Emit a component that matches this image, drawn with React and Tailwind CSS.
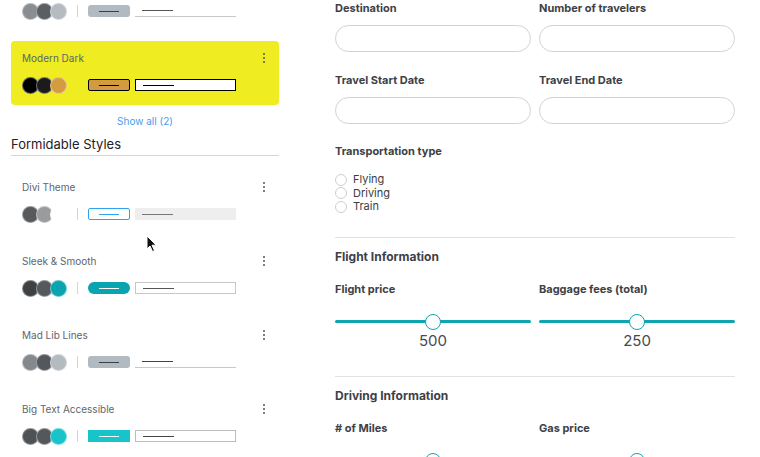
import React from 'react'

const font = { fontFamily: 'Inter, "Noto Sans", sans-serif' }

function Kebab() {
  return (
    <div className="flex flex-col gap-[2px] items-center w-[3px]">
      <span className="w-[2px] h-[2px] rounded-full bg-[#555]" />
      <span className="w-[2px] h-[2px] rounded-full bg-[#555]" />
      <span className="w-[2px] h-[2px] rounded-full bg-[#555]" />
    </div>
  )
}

function Swatches({ colors, button, input, line }) {
  return (
    <div className="flex items-center h-4">
      <div className="flex items-center">
        {colors.map((c, i) => (
          <span
            key={i}
            className={`w-[17px] h-[17px] rounded-full border border-white/40 ${i > 0 ? '-ml-[3px]' : ''} ${c}`}
          />
        ))}
      </div>
      <span className="ml-[10px] w-px h-[12px] bg-[#d4d4d4]" />
      <div className={`ml-[10px] w-[42px] h-[12px] flex items-center justify-center ${button}`}>
        <span className={`w-[20px] h-px ${line}`} />
      </div>
      <div className={`ml-[5px] w-[101px] h-[12px] flex items-center pl-[7px] ${input}`}>
        <span className="w-[31px] h-px bg-current" />
      </div>
    </div>
  )
}

function StyleCard({ title, highlight, ...sw }) {
  return (
    <div className={`rounded-[4px] px-[11px] pt-[10px] pb-[12px] ${highlight ? 'bg-[#efec21]' : ''}`}>
      <div className="flex items-center justify-between h-[14px] pr-[3px]">
        <span className="text-[10px] text-[#60656b] leading-[14px]">{title}</span>
        <Kebab />
      </div>
      <div className="mt-[12px]">
        <Swatches {...sw} />
      </div>
    </div>
  )
}

function Label({ children, className = '' }) {
  return <div className={`text-[11px] font-bold text-[#3d4147] leading-[14px] ${className}`}>{children}</div>
}

function Field({ label }) {
  return (
    <div>
      <Label>{label}</Label>
      <div className="mt-[10px] h-[27px] rounded-full border border-[#d2d2d2] bg-white" />
    </div>
  )
}

function Slider({ label, value, pct }) {
  return (
    <div>
      <Label>{label}</Label>
      <div className="relative mt-[18px] h-[16px] flex items-center">
        <div className="w-full h-[3px] rounded-full bg-[#0ea5b1]" />
        <span
          className="absolute top-0 w-[16px] h-[16px] -ml-[8px] rounded-full bg-white border border-[#0ea5b1]"
          style={{ left: pct + '%' }}
        />
      </div>
      <div className="relative h-[18px] mt-[2px]">
        <span
          className="absolute -translate-x-1/2 text-[15px] leading-[18px] text-[#474a4f]"
          style={{ left: pct + '%' }}
        >
          {value}
        </span>
      </div>
    </div>
  )
}

export default function App() {
  return (
    <div className="relative flex w-[760px] h-[457px] overflow-hidden bg-white" style={font}>
      <div className="w-[290px] shrink-0 pl-[11px] pr-[11px]">
        <div className="px-[11px] pt-[3px] pb-[12px]">
          <Swatches
            colors={['bg-[#8a8e93]', 'bg-[#5a5f64]', 'bg-[#b4bbc1]']}
            button="bg-[#b2bac1] rounded-[3px]"
            line="bg-[#3a3f44]"
            input="border-b border-[#c8c8c8] text-[#555]"
          />
        </div>
        <div className="mt-[10px]">
          <StyleCard
            title="Modern Dark"
            highlight
            colors={['bg-black', 'bg-[#1b1b1b]', 'bg-[#d39c40]']}
            button="bg-[#d29b42] border border-black rounded-[2px]"
            line="bg-black"
            input="bg-white border border-black text-black"
          />
        </div>
        <div className="mt-[9px] text-center text-[10px] leading-[14px] text-[#4a9cee]">Show all (2)</div>
        <div className="mt-[7px] text-[13px] leading-[18px] text-[#1f2124] pb-[2px] border-b border-[#d6d6d6]">
          Formidable Styles
        </div>
        <div className="mt-[14px] flex flex-col gap-[10px]">
          <StyleCard
            title="Divi Theme"
            colors={['bg-[#58595b]', 'bg-[#9a9b9d]', 'bg-white']}
            button="bg-white border border-[#2ea3f2] rounded-[2px]"
            line="bg-[#2ea3f2]"
            input="bg-[#eeeeee] text-[#777]"
          />
          <StyleCard
            title="Sleek & Smooth"
            colors={['bg-[#3e4144]', 'bg-[#56595c]', 'bg-[#0aa3b0]']}
            button="bg-[#0aa3b0] rounded-full"
            line="bg-white"
            input="bg-white border border-[#c8c8c8] text-[#555]"
          />
          <StyleCard
            title="Mad Lib Lines"
            colors={['bg-[#85898e]', 'bg-[#53585d]', 'bg-[#b3bac0]']}
            button="bg-[#b2bac1] rounded-[3px]"
            line="bg-[#3a3f44]"
            input="border-b border-[#c8c8c8] text-[#444]"
          />
          <StyleCard
            title="Big Text Accessible"
            colors={['bg-[#4f5254]', 'bg-[#55585a]', 'bg-[#17c4c9]']}
            button="bg-[#17c4c9]"
            line="bg-white"
            input="bg-white border border-[#bdbdbd] text-[#444]"
          />
        </div>
      </div>

      <div className="flex-1 pl-[45px] pt-[1px]">
        <div className="w-[400px]">
          <div className="grid grid-cols-2 gap-x-[8px]">
            <Field label="Destination" />
            <Field label="Number of travelers" />
          </div>
          <div className="grid grid-cols-2 gap-x-[8px] mt-[21px]">
            <Field label="Travel Start Date" />
            <Field label="Travel End Date" />
          </div>
          <Label className="mt-[20px]">Transportation type</Label>
          <div className="mt-[15px] flex flex-col">
            {['Flying', 'Driving', 'Train'].map(t => (
              <div key={t} className="flex items-center h-[13.5px]">
                <span className="w-[12px] h-[12px] rounded-full border border-[#cfcfcf] bg-white" />
                <span className="ml-[6px] text-[11px] text-[#3a3d42] leading-[13px]">{t}</span>
              </div>
            ))}
          </div>
          <div className="mt-[23px] border-t border-[#e2e2e2]" />
          <div className="mt-[11px] text-[12px] font-bold leading-[16px] text-[#3d4147]">Flight Information</div>
          <div className="grid grid-cols-2 gap-x-[8px] mt-[17px]">
            <Slider label="Flight price" value="500" pct={50} />
            <Slider label="Baggage fees (total)" value="250" pct={50} />
          </div>
          <div className="mt-[26px] border-t border-[#e2e2e2]" />
          <div className="mt-[11px] text-[12px] font-bold leading-[16px] text-[#3d4147]">Driving Information</div>
          <div className="grid grid-cols-2 gap-x-[8px] mt-[17px]">
            <Slider label="# of Miles" value="" pct={50} />
            <Slider label="Gas price" value="" pct={50} />
          </div>
        </div>
      </div>

      <svg className="absolute left-[146px] top-[235px]" width="12" height="18" viewBox="0 0 12 18">
        <path d="M1 1 L1 14 L4 11 L6.5 16.5 L8.5 15.5 L6 10.2 L10.2 10.2 Z" fill="#111" stroke="#fff" strokeWidth="1" strokeLinejoin="round" />
      </svg>
    </div>
  )
}
